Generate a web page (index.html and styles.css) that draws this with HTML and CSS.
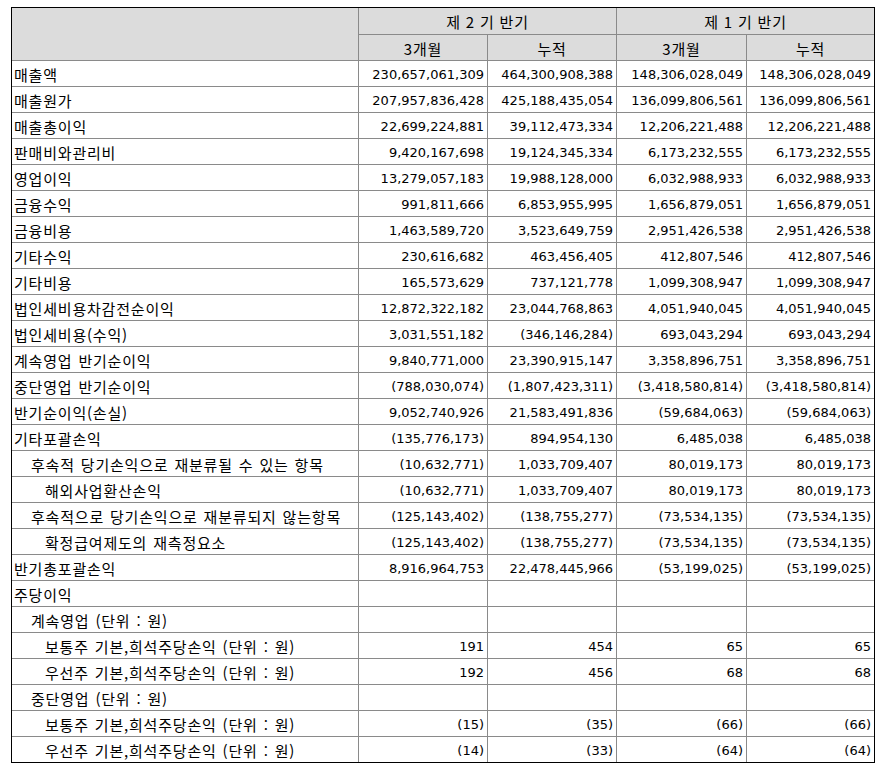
FILE: index.html
```html
<!DOCTYPE html>
<html lang="ko">
<head>
<meta charset="utf-8">
<title>반기 포괄손익계산서</title>
<link rel="stylesheet" href="styles.css">
</head>
<body>
<table class="fin">
  <colgroup>
    <col class="c-label">
    <col class="c-a">
    <col class="c-b">
    <col class="c-c">
    <col class="c-d">
  </colgroup>
  <thead>
    <tr class="h1">
      <th rowspan="2" class="blank"></th>
      <th colspan="2">제 2 기 반기</th>
      <th colspan="2" class="last">제 1 기 반기</th>
    </tr>
    <tr class="h2">
      <th>3개월</th>
      <th>누적</th>
      <th>3개월</th>
      <th class="last">누적</th>
    </tr>
  </thead>
  <tbody>
    <tr><td class="lbl">매출액</td><td>230,657,061,309</td><td>464,300,908,388</td><td>148,306,028,049</td><td class="last">148,306,028,049</td></tr>
    <tr><td class="lbl">매출원가</td><td>207,957,836,428</td><td>425,188,435,054</td><td>136,099,806,561</td><td class="last">136,099,806,561</td></tr>
    <tr><td class="lbl">매출총이익</td><td>22,699,224,881</td><td>39,112,473,334</td><td>12,206,221,488</td><td class="last">12,206,221,488</td></tr>
    <tr><td class="lbl">판매비와관리비</td><td>9,420,167,698</td><td>19,124,345,334</td><td>6,173,232,555</td><td class="last">6,173,232,555</td></tr>
    <tr><td class="lbl">영업이익</td><td>13,279,057,183</td><td>19,988,128,000</td><td>6,032,988,933</td><td class="last">6,032,988,933</td></tr>
    <tr><td class="lbl">금융수익</td><td>991,811,666</td><td>6,853,955,995</td><td>1,656,879,051</td><td class="last">1,656,879,051</td></tr>
    <tr><td class="lbl">금융비용</td><td>1,463,589,720</td><td>3,523,649,759</td><td>2,951,426,538</td><td class="last">2,951,426,538</td></tr>
    <tr><td class="lbl">기타수익</td><td>230,616,682</td><td>463,456,405</td><td>412,807,546</td><td class="last">412,807,546</td></tr>
    <tr><td class="lbl">기타비용</td><td>165,573,629</td><td>737,121,778</td><td>1,099,308,947</td><td class="last">1,099,308,947</td></tr>
    <tr><td class="lbl">법인세비용차감전순이익</td><td>12,872,322,182</td><td>23,044,768,863</td><td>4,051,940,045</td><td class="last">4,051,940,045</td></tr>
    <tr><td class="lbl">법인세비용(수익)</td><td>3,031,551,182</td><td>(346,146,284)</td><td>693,043,294</td><td class="last">693,043,294</td></tr>
    <tr><td class="lbl">계속영업 반기순이익</td><td>9,840,771,000</td><td>23,390,915,147</td><td>3,358,896,751</td><td class="last">3,358,896,751</td></tr>
    <tr><td class="lbl">중단영업 반기순이익</td><td>(788,030,074)</td><td>(1,807,423,311)</td><td>(3,418,580,814)</td><td class="last">(3,418,580,814)</td></tr>
    <tr><td class="lbl">반기순이익(손실)</td><td>9,052,740,926</td><td>21,583,491,836</td><td>(59,684,063)</td><td class="last">(59,684,063)</td></tr>
    <tr><td class="lbl">기타포괄손익</td><td>(135,776,173)</td><td>894,954,130</td><td>6,485,038</td><td class="last">6,485,038</td></tr>
    <tr><td class="lbl ind1">후속적 당기손익으로 재분류될 수 있는 항목</td><td>(10,632,771)</td><td>1,033,709,407</td><td>80,019,173</td><td class="last">80,019,173</td></tr>
    <tr><td class="lbl ind2">해외사업환산손익</td><td>(10,632,771)</td><td>1,033,709,407</td><td>80,019,173</td><td class="last">80,019,173</td></tr>
    <tr><td class="lbl ind1">후속적으로 당기손익으로 재분류되지 않는항목</td><td>(125,143,402)</td><td>(138,755,277)</td><td>(73,534,135)</td><td class="last">(73,534,135)</td></tr>
    <tr><td class="lbl ind2">확정급여제도의 재측정요소</td><td>(125,143,402)</td><td>(138,755,277)</td><td>(73,534,135)</td><td class="last">(73,534,135)</td></tr>
    <tr><td class="lbl">반기총포괄손익</td><td>8,916,964,753</td><td>22,478,445,966</td><td>(53,199,025)</td><td class="last">(53,199,025)</td></tr>
    <tr><td class="lbl">주당이익</td><td></td><td></td><td></td><td class="last"></td></tr>
    <tr><td class="lbl ind1">계속영업 (단위 : 원)</td><td></td><td></td><td></td><td class="last"></td></tr>
    <tr><td class="lbl ind2">보통주 기본,희석주당손익 (단위 : 원)</td><td>191</td><td>454</td><td>65</td><td class="last">65</td></tr>
    <tr><td class="lbl ind2">우선주 기본,희석주당손익 (단위 : 원)</td><td>192</td><td>456</td><td>68</td><td class="last">68</td></tr>
    <tr><td class="lbl ind1">중단영업 (단위 : 원)</td><td></td><td></td><td></td><td class="last"></td></tr>
    <tr><td class="lbl ind2">보통주 기본,희석주당손익 (단위 : 원)</td><td>(15)</td><td>(35)</td><td>(66)</td><td class="last">(66)</td></tr>
    <tr class="lastrow"><td class="lbl ind2">우선주 기본,희석주당손익 (단위 : 원)</td><td>(14)</td><td>(33)</td><td>(64)</td><td class="last">(64)</td></tr>
  </tbody>
</table>
</body>
</html>
```

FILE: styles.css
```css
html, body {
  margin: 0;
  padding: 0;
  background: #ffffff;
}

body {
  padding: 7px 0 0 11px;
}

.fin {
  border-collapse: separate;
  border-spacing: 0;
  border: 1px solid #000000;
  table-layout: fixed;
  width: 864px;
  color: #000000;
}

.c-label { width: 347px; }
.c-a { width: 129px; }
.c-b { width: 129px; }
.c-c { width: 130px; }
.c-d { width: 127px; }

.fin th,
.fin td {
  box-sizing: border-box;
  border-right: 1px solid #8a8a8a;
  border-bottom: 1px solid #8a8a8a;
  height: 26px;
  padding: 2px 3px 0 3px;
  white-space: nowrap;
  overflow: hidden;
  line-height: 22px;
}

.fin .last {
  border-right: none;
}

.fin .lastrow td {
  border-bottom: none;
  height: 25px;
}

.fin th {
  background: #dcdcdc;
  font-family: "Noto Sans CJK KR", "DejaVu Sans", sans-serif;
  font-weight: normal;
  font-size: 15px;
  text-align: center;
  letter-spacing: 0.8px;
}

.fin .h1 th {
  height: 27px;
}

.fin td {
  font-family: "DejaVu Sans", "Noto Sans CJK KR", sans-serif;
  font-size: 13px;
  text-align: right;
}

.fin td.lbl {
  font-family: "Noto Sans CJK KR", "DejaVu Sans", sans-serif;
  font-size: 15px;
  text-align: left;
  padding-left: 2px;
  letter-spacing: 0.8px;
  word-spacing: 1px;
}

.fin td.ind1 {
  padding-left: 19px;
}

.fin td.ind2 {
  padding-left: 33px;
}
```
